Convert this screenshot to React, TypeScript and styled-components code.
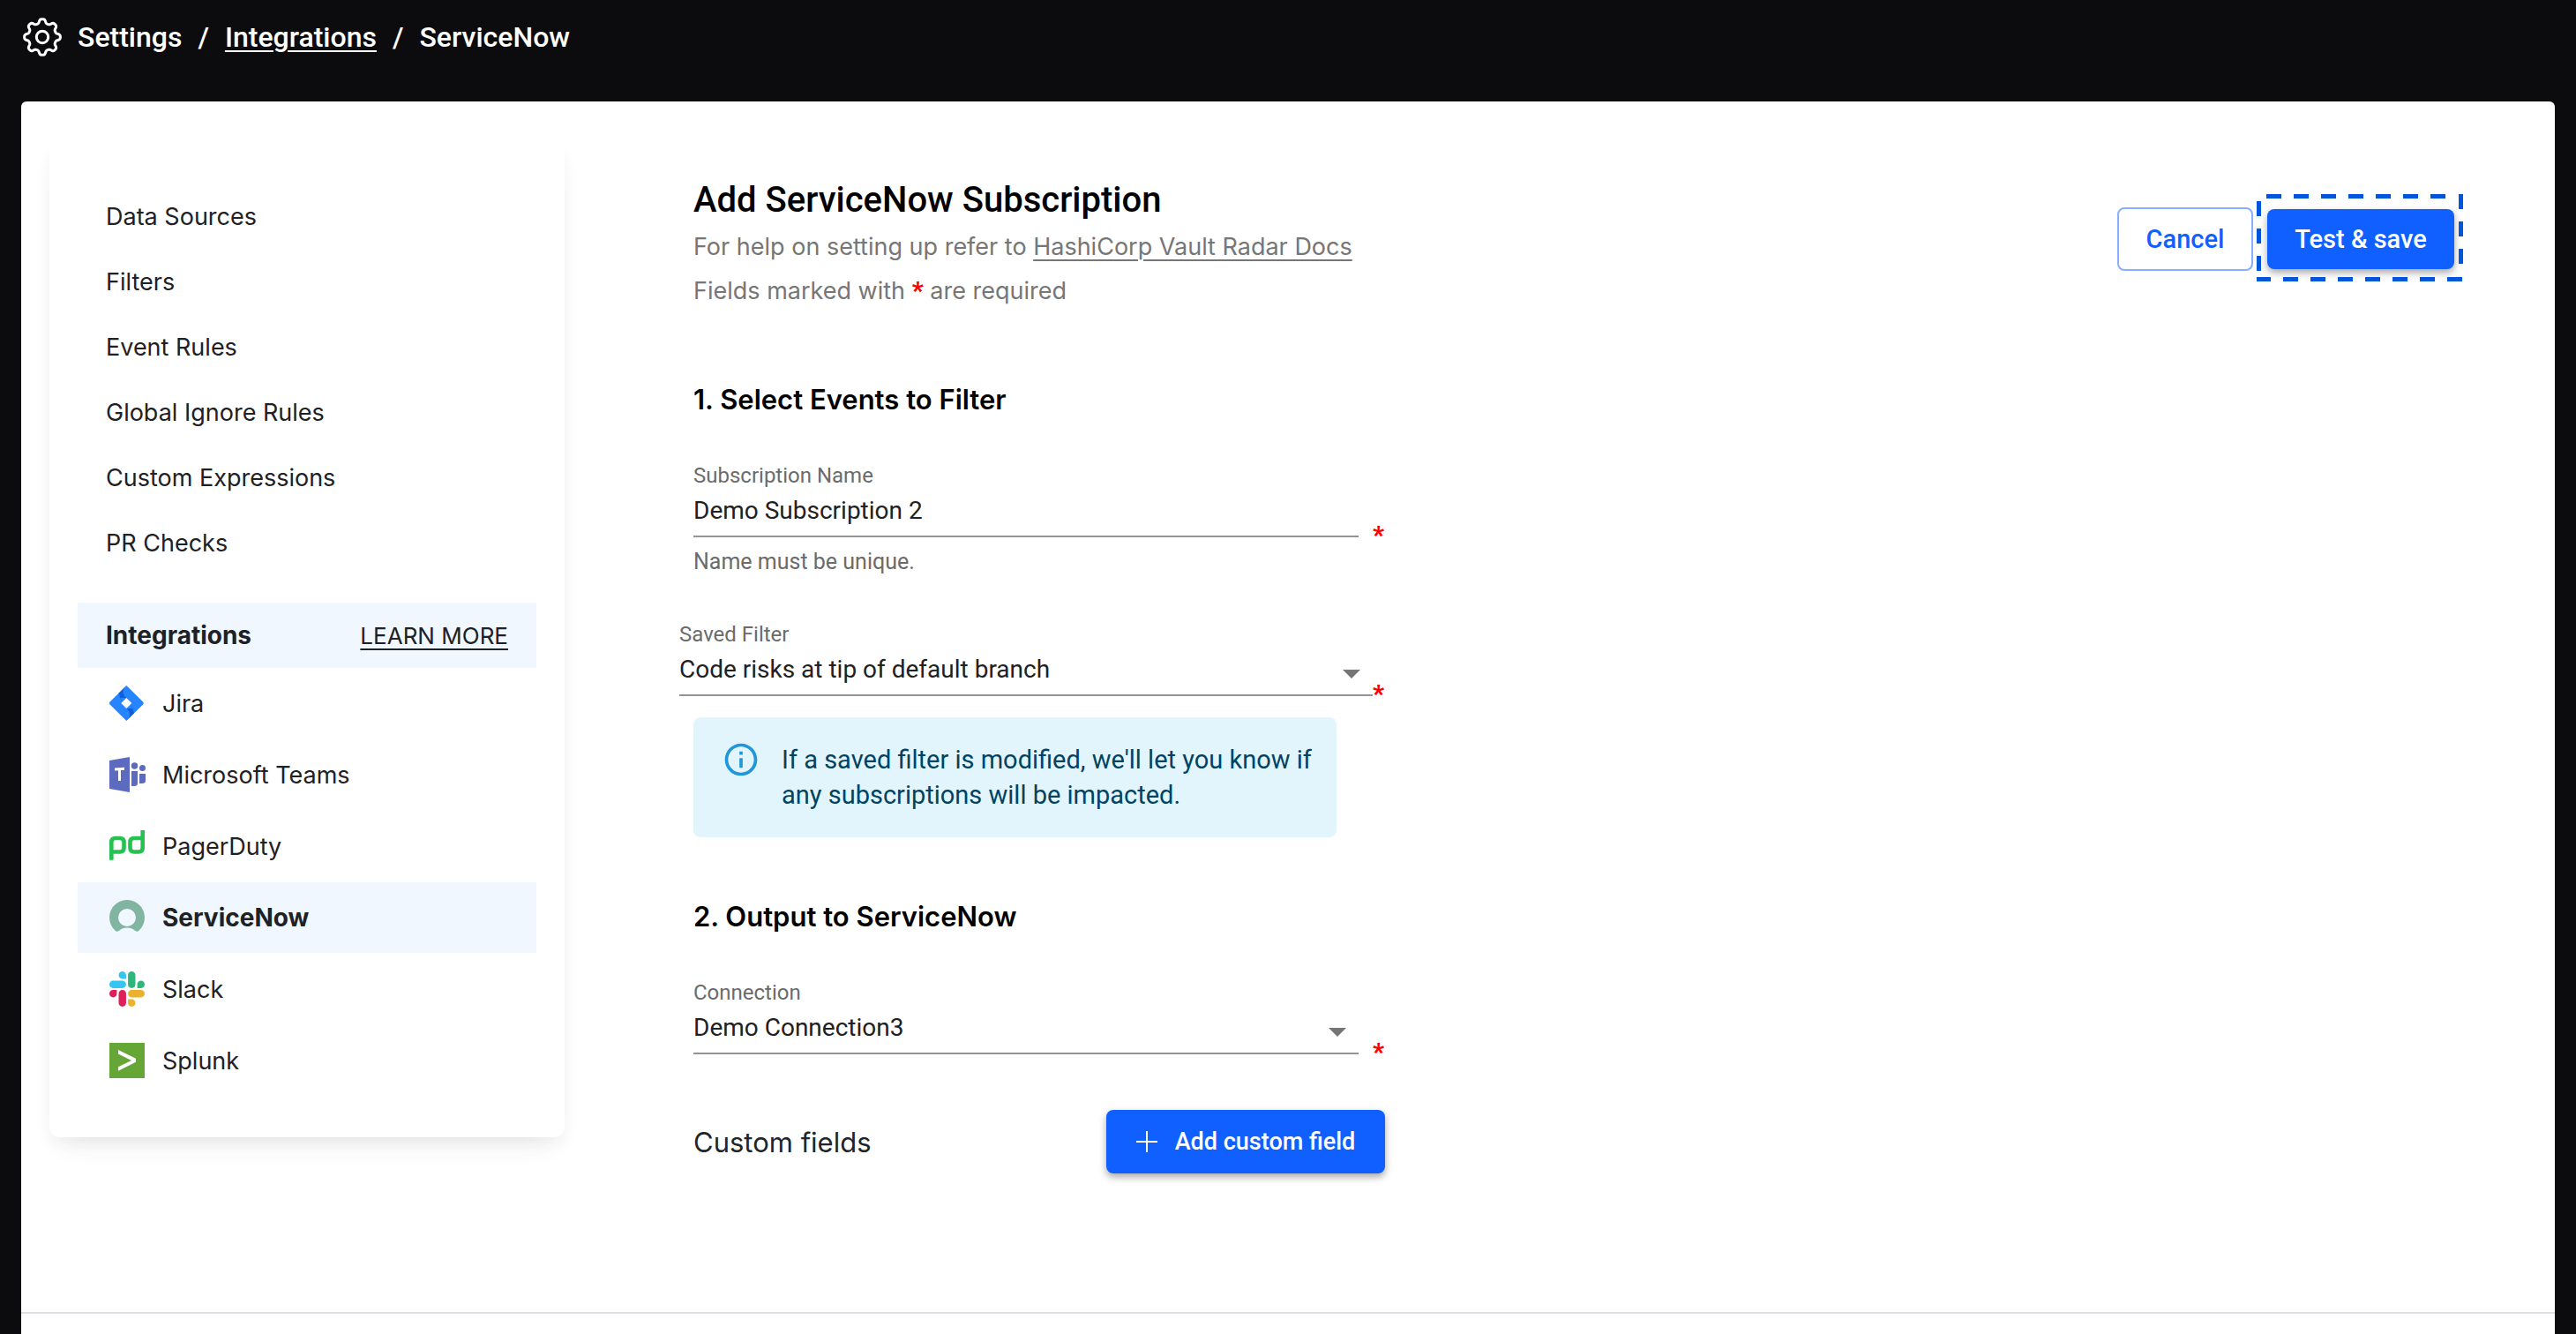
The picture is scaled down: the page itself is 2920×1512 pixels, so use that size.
import React from "react";
import styled, { createGlobalStyle, css } from "styled-components";

const sans = `Inter, "Liberation Sans", sans-serif`;
const roboto = `Roboto, "Liberation Sans", sans-serif`;

const GlobalStyle = createGlobalStyle`
  *, *::before, *::after { box-sizing: border-box; }
  body { margin: 0; background: #0c0c0e; font-family: ${sans}; color: #202124; }
  h1, h2, h3, p, ul { margin: 0; padding: 0; }
  ul { list-style: none; }
  button, input, select { font: inherit; }
`;

const Page = styled.div`
  display: flex;
  flex-direction: column;
  min-height: 100vh;
  padding: 0 24px;
`;

const TopBar = styled.header`
  display: flex;
  align-items: flex-start;
  height: 115px;
  padding: 20px 2px 0;
`;

const Breadcrumbs = styled.nav`
  display: flex;
  align-items: center;
  gap: 18px;
  color: #fff;
  font: 500 32px/44px ${roboto};

  a { color: inherit; text-decoration-thickness: 2px; text-underline-offset: 4px; }
  svg { display: block; width: 44px; height: 44px; }
`;

const Panel = styled.div`
  display: flex;
  flex-direction: column;
  flex: 1;
  background: #fff;
  border-radius: 6px 6px 0 0;
`;

const Columns = styled.div`
  display: flex;
  align-items: flex-start;
  flex: 1;
  padding: 40px 104px 0 32px;
`;

const Footer = styled.footer`
  height: 25px;
  border-top: 2px solid #dedfe6;
`;

const Sidebar = styled.nav`
  flex: none;
  width: 584px;
  padding: 53px 32px 47px;
  border-radius: 12px;
  background: #fff;
  box-shadow: 0 16px 32px -16px rgba(50, 55, 70, 0.15), 0 10px 12px rgba(50, 55, 70, 0.03);
`;

const NavLink = styled.a`
  display: flex;
  align-items: center;
  height: 74px;
  padding: 0 32px;
  color: #202124;
  font-size: 27px;
  text-decoration: none;
`;

const GroupHead = styled.div`
  display: flex;
  align-items: center;
  justify-content: space-between;
  height: 74px;
  margin-top: 31px;
  padding: 0 32px;
  background: #f0f7ff;

  h2 { font-size: 28px; font-weight: 700; }
  a {
    color: inherit;
    font-size: 26px;
    text-decoration-thickness: 2px;
    text-underline-offset: 5px;
  }
`;

const IntegrationList = styled.ul`
  display: grid;
  gap: 1px;
`;

const IntegrationLink = styled.a<{ $active?: boolean }>`
  display: flex;
  align-items: center;
  gap: 20px;
  height: 80px;
  padding: 0 36px;
  color: #202124;
  font-size: ${(p) => (p.$active ? 28 : 27)}px;
  font-weight: ${(p) => (p.$active ? 700 : 400)};
  background: ${(p) => (p.$active ? "#f0f7ff" : "transparent")};
  text-decoration: none;

  svg { flex: none; width: 40px; height: 40px; overflow: visible; }
`;

const Form = styled.form`
  display: flex;
  align-items: flex-start;
  justify-content: space-between;
  flex: 1;
  padding: 44px 0 0 146px;
`;

const Fields = styled.div`
  width: 784px;
`;

const Intro = styled.div`
  padding-bottom: 8px;
`;

const Title = styled.h1`
  color: #000;
  font: 500 40px/56px ${roboto};
  white-space: nowrap;
`;

const Lead = styled.p`
  color: #767676;
  font-size: 27px;
  line-height: 50px;
  white-space: nowrap;

  a { color: inherit; text-decoration-thickness: 2px; text-underline-offset: 5px; }
`;

const Star = styled.span`
  color: #f00;
  font-family: ${roboto};
  font-size: 28px;
  font-weight: 900;
  line-height: 24px;
`;

const StepTitle = styled.h2`
  margin-top: 68px;
  padding-bottom: 48px;
  color: #000;
  font-size: 31px;
  font-weight: 600;
  line-height: 44px;
`;

const Field = styled.div<{ $wide?: boolean }>`
  display: grid;
  grid-template-columns: 1fr auto;
  column-gap: ${(p) => (p.$wide ? 0 : 16)}px;
  align-items: end;
  margin-left: ${(p) => (p.$wide ? -16 : 0)}px;
  font-family: ${roboto};

  label {
    grid-column: 1 / -1;
    color: #6b6b6b;
    font-size: 24px;
    line-height: 32px;
  }

  > ${Star} { width: 14px; height: 14px; }
`;

const controlStyle = css`
  display: block;
  width: 100%;
  height: 54px;
  padding: 0 0 6px;
  border: 0;
  border-bottom: 2px solid #949494;
  border-radius: 0;
  outline: 0;
  background: transparent;
  color: #212121;
  font-size: 28px;
`;

const TextInput = styled.input`
  ${controlStyle}
`;

const SelectBox = styled.div`
  position: relative;

  select { ${controlStyle} appearance: none; }
  svg {
    position: absolute;
    right: 14px;
    bottom: 20px;
    width: 20px;
    height: 10px;
    pointer-events: none;
  }
`;

const Hint = styled.p`
  margin: 12px 0 50px;
  color: #6b6b6b;
  font: 400 25px/32px ${roboto};
`;

const Notice = styled.div`
  display: flex;
  align-items: flex-start;
  gap: 24px;
  width: 729px;
  margin-top: 24px;
  padding: 28px 24px 28px 32px;
  border-radius: 8px;
  background: #e2f5fd;
  color: #014361;
  font: 400 29px/40px ${roboto};

  svg { flex: none; width: 44px; height: 44px; margin-top: -2px; }
`;

const CustomRow = styled.div`
  display: flex;
  align-items: center;
  justify-content: space-between;
  margin-top: 63px;

  h3 { color: #212529; font-size: 31px; font-weight: 400; }
`;

const Button = styled.button<{ $outline?: boolean }>`
  display: flex;
  align-items: center;
  justify-content: center;
  gap: 20px;
  height: ${(p) => (p.$outline ? 72 : 68)}px;
  padding: 0;
  border: ${(p) => (p.$outline ? "2px solid #87aeff" : "0")};
  border-radius: 8px;
  background: ${(p) => (p.$outline ? "#fff" : "#1060ff")};
  box-shadow: ${(p) => (p.$outline ? "none" : "0 4px 8px rgba(0, 0, 0, 0.35)")};
  color: ${(p) => (p.$outline ? "#1060ff" : "#fff")};
  font: 500 29px/40px ${roboto};
  white-space: nowrap;
`;

const CancelButton = styled(Button)`
  width: 154px;
  margin-bottom: 12px;
`;

const SaveButton = styled(Button)`
  width: 212px;
`;

const AddButton = styled(Button)`
  width: 316px;
  height: 72px;
  font-size: 27px;
`;

const Actions = styled.div`
  display: flex;
  align-items: flex-end;
  gap: 4px;
  margin-top: 21px;
`;

const FocusFrame = styled.div`
  position: relative;
  padding: 17px 10px 14px 12px;

  > svg { position: absolute; inset: 0; width: 100%; height: 100%; pointer-events: none; }
`;

const gearOutline = Array.from({ length: 144 }, (_, i) => {
  const angle = (i * Math.PI) / 72;
  const radius = 18.1 + 2.4 * Math.tanh(1.8 * Math.cos(8 * angle));
  return `${(radius * Math.sin(angle)).toFixed(2)},${(-radius * Math.cos(angle)).toFixed(2)}`;
}).join(" ");

const GearIcon = () => (
  <svg viewBox="-22 -22 44 44" fill="none" stroke="#fff" strokeWidth="3" strokeLinejoin="round" aria-hidden="true">
    <polygon points={gearOutline} />
    <circle r="6.700" />
  </svg>
);

const JiraIcon = () => (
  <svg viewBox="0 0 40 40" aria-hidden="true">
    <path fill="#2684ff" d="M19.300 0L38.100 18.600a2 2 0 0 1 0 2.800L19.300 40L.6 21.400a2 2 0 0 1 0-2.800z" />
    <path fill="#0f5fd8" d="M19.300 0c-5 4.500-5 10 0 14L14 19L10.500 8.800z" />
    <path fill="#0f5fd8" d="M19.300 40c5-4.500 5-10 0-14L24.600 21L28 31.200z" />
    <path fill="#2684ff" d="M19.300 14L14 19.300L12.500 14zM19.300 26L24.600 20.700L26 26z" />
    <path fill="#fff" d="M19.300 14L25.300 20L19.300 26L13.300 20z" />
  </svg>
);

const TeamsIcon = () => (
  <svg viewBox="0 0 40 40" aria-hidden="true">
    <g fill="#5c6bc0">
      <path d="M0 4L23 0V40L0 36z" />
      <circle cx="28.500" cy="10" r="3.700" />
      <circle cx="37.500" cy="12.500" r="3.500" />
      <path d="M25 16h7v14q0 3-4 3h-3zM34 19h7v8q0 3-4 3h-3z" />
    </g>
    <path fill="#fff" d="M6 12.500L17 11.800V15H13V27H10V15.300L6 15.500z" />
  </svg>
);

const PagerDutyIcon = () => (
  <svg viewBox="0 0 40 40" fill="none" stroke="#25c151" strokeWidth="4.600" aria-hidden="true">
    <path d="M2.300 35.700V15.500q0-4.500 4.500-4.500h5.200q4.500 0 4.500 4.500v6.500q0 4.500-4.500 4.500H3" />
    <path d="M37.700 2V22q0 4.500-4.500 4.500h-5.200q-4.500 0-4.500-4.500v-6.500q0-4.500 4.500-4.500H37" />
  </svg>
);

const ServiceNowIcon = () => (
  <svg viewBox="0 0 40 40" aria-hidden="true">
    <path fill="#81b5a1" fillRule="evenodd" d="M20 0A20 20 0 0 0 6.500 34.700a3.200 3.200 0 0 0 4.200.2a14.500 14.500 0 0 1 18.600 0a3.200 3.200 0 0 0 4.200-.2A20 20 0 0 0 20 0zM20 30a10 10 0 1 1 0-20a10 10 0 0 1 0 20z" />
  </svg>
);

const SlackIcon = () => (
  <svg viewBox="0 0 122.800 122.800" aria-hidden="true">
    <path fill="#e01e5a" d="M25.800 77.600c0 7.100-5.800 12.900-12.900 12.900S0 84.700 0 77.600s5.800-12.900 12.900-12.900h12.900v12.900zM32.300 77.600c0-7.100 5.800-12.900 12.900-12.900s12.900 5.800 12.900 12.900v32.300c0 7.100-5.800 12.900-12.900 12.900s-12.900-5.800-12.900-12.900V77.600z" />
    <path fill="#36c5f0" d="M45.200 25.800c-7.100 0-12.900-5.800-12.900-12.900S38.100 0 45.200 0s12.900 5.800 12.900 12.900v12.900H45.200zM45.200 32.300c7.100 0 12.900 5.800 12.900 12.900s-5.800 12.900-12.900 12.900H12.900C5.800 58.100 0 52.300 0 45.200s5.800-12.900 12.900-12.900h32.300z" />
    <path fill="#2eb67d" d="M97 45.200c0-7.100 5.800-12.900 12.900-12.900s12.900 5.800 12.900 12.900-5.800 12.900-12.900 12.900H97V45.200zM90.500 45.200c0 7.100-5.800 12.900-12.900 12.900s-12.900-5.800-12.900-12.900V12.900C64.700 5.800 70.500 0 77.600 0s12.900 5.800 12.900 12.900v32.300z" />
    <path fill="#ecb22e" d="M77.600 97c7.100 0 12.900 5.800 12.900 12.900s-5.800 12.900-12.900 12.900-12.900-5.800-12.900-12.900V97h12.900zM77.600 90.500c-7.100 0-12.900-5.800-12.900-12.900s5.800-12.900 12.900-12.900h32.300c7.100 0 12.900 5.800 12.900 12.900s-5.800 12.900-12.900 12.900H77.600z" />
  </svg>
);

const SplunkIcon = () => (
  <svg viewBox="0 0 40 40" aria-hidden="true">
    <path fill="#65a637" d="M0 0h40v40H0z" />
    <path fill="#fff" d="M10 8L30 17.800V21.800L10 31.800V27.300L25 19.900L10 12.500z" />
  </svg>
);

const InfoIcon = () => (
  <svg viewBox="0 0 24 24" fill="#2196d9" aria-hidden="true">
    <path d="M11 7h2v2h-2zM11 11h2v6h-2zM12 2C6.480 2 2 6.480 2 12s4.480 10 10 10 10-4.480 10-10S17.520 2 12 2zm0 18c-4.410 0-8-3.590-8-8s3.590-8 8-8 8 3.590 8 8-3.590 8-8 8z" />
  </svg>
);

const Caret = () => (
  <svg viewBox="0 0 20 10" aria-hidden="true">
    <path fill="#757575" d="M0 0h20L10 10z" />
  </svg>
);

const PlusIcon = () => (
  <svg width="24" height="24" viewBox="0 0 24 24" stroke="#fff" strokeWidth="2" aria-hidden="true">
    <path d="M12 0V24M0 12H24" />
  </svg>
);

const DashedFrame = () => (
  <svg viewBox="0 0 234 99" stroke="#0055db" strokeWidth="5" strokeDasharray="17 14" fill="none" aria-hidden="true">
    <path d="M11 2.500H218" />
    <path d="M231.500 0V82" />
    <path d="M0 96.500H234" strokeDashoffset="1" />
    <path d="M2.500 8V90" />
  </svg>
);

const links = ["Data Sources", "Filters", "Event Rules", "Global Ignore Rules", "Custom Expressions", "PR Checks"];

const integrations = [
  { name: "Jira", Icon: JiraIcon },
  { name: "Microsoft Teams", Icon: TeamsIcon },
  { name: "PagerDuty", Icon: PagerDutyIcon },
  { name: "ServiceNow", Icon: ServiceNowIcon },
  { name: "Slack", Icon: SlackIcon },
  { name: "Splunk", Icon: SplunkIcon },
];

export default function App() {
  return (
    <>
      <GlobalStyle />
      <Page>
        <TopBar>
          <Breadcrumbs aria-label="Breadcrumb">
            <GearIcon />
            <span>Settings</span>
            <span>/</span>
            <a href="#integrations">Integrations</a>
            <span>/</span>
            <span>ServiceNow</span>
          </Breadcrumbs>
        </TopBar>
        <Panel>
          <Columns>
            <Sidebar aria-label="Settings">
              {links.map((name) => (
                <NavLink key={name} href="#settings">{name}</NavLink>
              ))}
              <GroupHead>
                <h2>Integrations</h2>
                <a href="#learn">LEARN MORE</a>
              </GroupHead>
              <IntegrationList>
                {integrations.map(({ name, Icon }) => (
                  <li key={name}>
                    <IntegrationLink href="#integration" $active={name === "ServiceNow"}>
                      <Icon />
                      {name}
                    </IntegrationLink>
                  </li>
                ))}
              </IntegrationList>
            </Sidebar>
            <Form onSubmit={(e) => e.preventDefault()}>
              <Fields>
                <Intro>
                  <Title>Add ServiceNow Subscription</Title>
                  <Lead>
                    For help on setting up refer to <a href="#docs">HashiCorp Vault Radar Docs</a>
                  </Lead>
                  <Lead>
                    Fields marked with <Star>*</Star> are required
                  </Lead>
                </Intro>
                <StepTitle>1. Select Events to Filter</StepTitle>
                <Field>
                  <label htmlFor="name">Subscription Name</label>
                  <TextInput id="name" defaultValue="Demo Subscription 2" />
                  <Star>*</Star>
                </Field>
                <Hint>Name must be unique.</Hint>
                <Field $wide>
                  <label htmlFor="filter">Saved Filter</label>
                  <SelectBox>
                    <select id="filter">
                      <option>Code risks at tip of default branch</option>
                    </select>
                    <Caret />
                  </SelectBox>
                  <Star>*</Star>
                </Field>
                <Notice>
                  <InfoIcon />
                  <p>If a saved filter is modified, we'll let you know if any subscriptions will be impacted.</p>
                </Notice>
                <StepTitle>2. Output to ServiceNow</StepTitle>
                <Field>
                  <label htmlFor="connection">Connection</label>
                  <SelectBox>
                    <select id="connection">
                      <option>Demo Connection3</option>
                    </select>
                    <Caret />
                  </SelectBox>
                  <Star>*</Star>
                </Field>
                <CustomRow>
                  <h3>Custom fields</h3>
                  <AddButton type="button">
                    <PlusIcon />
                    Add custom field
                  </AddButton>
                </CustomRow>
              </Fields>
              <Actions>
                <CancelButton type="button" $outline>Cancel</CancelButton>
                <FocusFrame>
                  <SaveButton type="submit">Test &amp; save</SaveButton>
                  <DashedFrame />
                </FocusFrame>
              </Actions>
            </Form>
          </Columns>
          <Footer />
        </Panel>
      </Page>
    </>
  );
}
